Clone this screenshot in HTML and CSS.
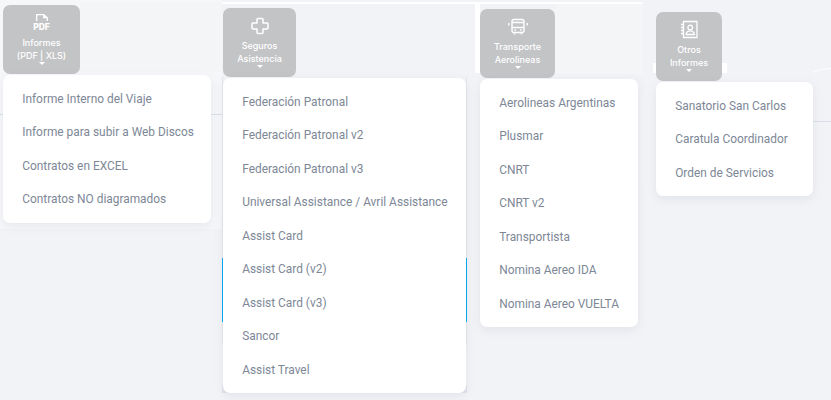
FILE: index.html
```html
<!DOCTYPE html>
<html lang="es">
<head>
<meta charset="utf-8">
<title>Informes</title>
<link rel="stylesheet" href="styles.css">
</head>
<body>
<div class="backdrop backdrop-c"></div>
<div class="backdrop backdrop-a"></div>
<div class="backdrop backdrop-b"></div>
<div class="backdrop backdrop-d"></div>
<div class="backdrop backdrop-e"></div>
<div class="backdrop backdrop-f"></div>
<div class="backdrop backdrop-g"></div>
<div class="backdrop rule rule-left"></div>
<div class="backdrop rule rule-right"></div>
<div class="backdrop edge edge-left"></div>
<div class="backdrop edge edge-right"></div>
<div class="backdrop arc"></div>
<div class="accent accent-left"></div>
<div class="accent accent-right"></div>
<main class="page">
  <section class="col col-1">
    <button class="tile tile-1">
      <svg class="icon" viewBox="0 0 14 7" fill="none" stroke="#fff" stroke-width="1.300"><path d="M1.700 7V.7h7l3.600 3V7M8.700.7v3h3.600"/></svg>
      <span class="pdf">PDF</span>
      <span class="label">Informes<br>(PDF | XLS)</span>
      <span class="caret"></span>
    </button>
    <ul class="menu">
      <li>Informe Interno del Viaje</li>
      <li>Informe para subir a Web Discos</li>
      <li>Contratos en EXCEL</li>
      <li>Contratos NO diagramados</li>
    </ul>
  </section>
  <section class="col col-2">
    <button class="tile tile-2">
      <svg class="icon-big" viewBox="0 0 20 20" fill="none" stroke="#fff" stroke-width="1.500" stroke-linejoin="round"><path d="M7 3.500a1 1 0 0 1 1-1h4a1 1 0 0 1 1 1V7h4a1 1 0 0 1 1 1v4a1 1 0 0 1-1 1h-4v3.500a1 1 0 0 1-1 1H8a1 1 0 0 1-1-1V13H3a1 1 0 0 1-1-1V8a1 1 0 0 1 1-1h4z"/></svg>
      <span class="label">Seguros<br>Asistencia</span>
      <span class="caret"></span>
    </button>
    <ul class="menu">
      <li>Federación Patronal</li>
      <li>Federación Patronal v2</li>
      <li>Federación Patronal v3</li>
      <li>Universal Assistance / Avril Assistance</li>
      <li>Assist Card</li>
      <li>Assist Card (v2)</li>
      <li>Assist Card (v3)</li>
      <li>Sancor</li>
      <li>Assist Travel</li>
    </ul>
  </section>
  <section class="col col-3">
    <button class="tile tile-3">
      <svg class="icon-big" viewBox="0 0 20 20" fill="none" stroke="#fff" stroke-width="1.400" stroke-linejoin="round"><rect x="4" y="2.500" width="12" height="13" rx="2"/><path d="M4 10.500h12M4 5.500h12M6.500 15.500v2M13.500 15.500v2M.8 6v2.500M19.200 6v2.500"/><path d="M6.500 13h1.500M12 13h1.500"/></svg>
      <span class="label">Transporte<br>Aerolineas</span>
      <span class="caret"></span>
    </button>
    <ul class="menu">
      <li>Aerolineas Argentinas</li>
      <li>Plusmar</li>
      <li>CNRT</li>
      <li>CNRT v2</li>
      <li>Transportista</li>
      <li>Nomina Aereo IDA</li>
      <li>Nomina Aereo VUELTA</li>
    </ul>
  </section>
  <section class="col col-4">
    <button class="tile tile-4">
      <svg class="icon-big" viewBox="0 0 20 20" fill="none" stroke="#fff" stroke-width="1.300" stroke-linejoin="round"><rect x="4.500" y="1.500" width="13.500" height="16"/><circle cx="11.200" cy="7.500" r="2.300"/><path d="M7 14.500c.5-2.600 2-3.700 4.200-3.700s3.700 1.100 4.300 3.700zM2 4.500h3M2 7.500h3M2 10.500h3M2 13.500h3"/></svg>
      <span class="label">Otros<br>Informes</span>
      <span class="caret"></span>
    </button>
    <ul class="menu">
      <li>Sanatorio San Carlos</li>
      <li>Caratula Coordinador</li>
      <li>Orden de Servicios</li>
    </ul>
  </section>
</main>
</body>
</html>
```

FILE: styles.css
```css
* { box-sizing: border-box; }
html, body { margin: 0; height: 400px; overflow: hidden; }
body { background: #f2f3f6; font-family: "Roboto", "Liberation Sans", sans-serif; position: relative; }
.backdrop { position: absolute; }
.backdrop-a { left: 80px; top: 2px; width: 142px; height: 70px; background: #f4f5f7; }
.backdrop-b { left: 222px; top: 2px; width: 421px; height: 2px; background: #fff; }
.backdrop-c { left: 0; top: 0; width: 222px; height: 229px; background: #f6f7f9; }
.backdrop-d { left: 475px; top: 3px; width: 5px; height: 70px; background: #fff; }
.backdrop-e { left: 222px; top: 385px; width: 245px; height: 8px; background: #e0e3ec; }
.backdrop-f { left: 555px; top: 4px; width: 88px; height: 70px; background: #f4f5f7; }
.backdrop-g { left: 653px; top: 63px; width: 74px; height: 10px; background: #fff; }
.rule { height: 1px; background: #dcdfe8; }
.rule-left { left: 0; top: 114px; width: 222px; }
.rule-right { left: 813px; top: 121px; width: 18px; }
.edge { top: 77px; width: 1px; height: 268px; background: #e6e7ec; }
.edge-left { left: 222px; }
.edge-right { left: 466px; }
.arc { left: 790px; top: 68px; width: 80px; height: 80px; border: 1px solid #fff; border-radius: 50%; clip-path: inset(0 0 50% 23px); }
.accent { position: absolute; top: 258px; width: 1px; height: 64px; background: #03a9f4; }
.accent-left { left: 222px; }
.accent-right { left: 466px; }
.page { position: relative; display: flex; align-items: flex-start; padding-left: 3px; }
.col { display: flex; flex-direction: column; align-items: flex-start; }
.col-1 { width: 208px; margin: 5px 12px 0 0; }
.col-2 { width: 243px; margin: 8px 14px 0 0; }
.col-3 { width: 158px; margin: 9px 18px 0 0; }
.col-4 { width: 157px; margin: 12px 0 0 0; }
.tile { display: flex; flex-direction: column; align-items: center; height: 69px; padding: 8px 0 0; border: 0; border-radius: 7px; background: #c3c4c6; color: #fff; font: inherit; }
.tile-1 { width: 77px; }
.tile-2 { width: 73px; }
.tile-3 { width: 75px; }
.tile-4 { width: 66px; }
.icon { display: block; width: 14px; height: 7px; margin-top: 1px; }
.icon-big { display: block; flex: none; width: 20px; height: 20px; margin-bottom: 2.500px; }
.pdf { font-family: "Inter", sans-serif; font-size: 8.500px; font-weight: 800; line-height: 8px; margin: 2px 0 4.500px; }
.label { font-family: "Inter", sans-serif; font-size: 9px; font-weight: 500; line-height: 13px; text-align: center; white-space: nowrap; }
.caret { width: 0; height: 0; border: 3px solid transparent; border-top-color: #fff; border-bottom: 0; }
.menu { width: 100%; margin: 1px 0 0; padding: 7.500px 0 6px; list-style: none; background: #fff; border-radius: 7px; box-shadow: 0 3px 10px rgba(120, 130, 160, .13); }
.menu li { height: 33.500px; padding-left: 19.200px; font-size: 11.900px; line-height: 33.500px; color: #7d8796; white-space: nowrap; }
```
